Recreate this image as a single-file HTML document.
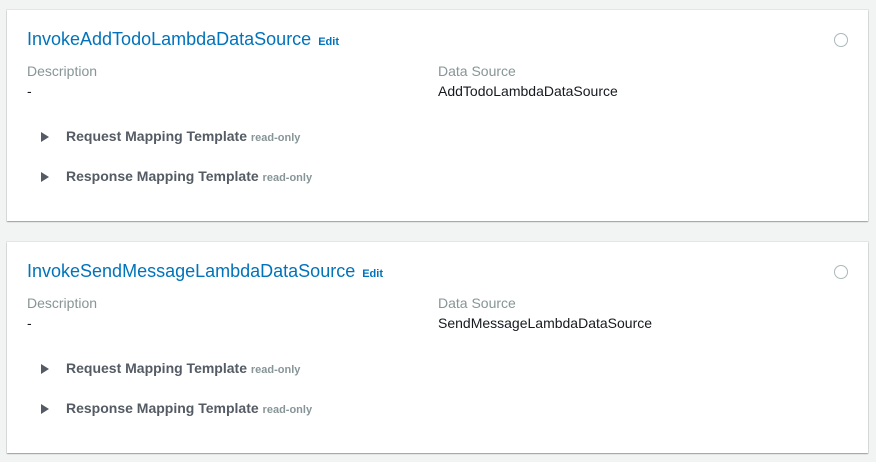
<!DOCTYPE html>
<html><head><style>
body{margin:0;width:876px;height:462px;background:#f2f3f3;font-family:"Liberation Sans",sans-serif;position:relative;overflow:hidden}
.card{position:absolute;left:7px;width:861px;height:211px;background:#fff;box-shadow:0 1px 1px rgba(0,28,36,.35),0 0 0 1px rgba(0,28,36,.06)}
.t{position:absolute;left:20px;top:19px;font-size:18px;color:#0073bb;white-space:nowrap}
.t span{font-size:11px;font-weight:bold;margin-left:2px}
.c{position:absolute;left:827px;top:23px;width:12px;height:12px;border:1px solid #aab7b8;border-radius:50%}
.l{position:absolute;top:53px;font-size:14px;color:#879596}
.v{position:absolute;top:73px;font-size:14px;color:#16191f}
.r{position:absolute;left:34px;font-size:14px;font-weight:bold;color:#545b64;white-space:nowrap}
.r i{display:inline-block;width:0;height:0;border-left:8px solid #545b64;border-top:5px solid transparent;border-bottom:5px solid transparent;margin-right:17px;vertical-align:-1px}
.r span{font-size:11px;color:#879596}
</style></head><body>
<div class="card" style="top:10px">
<div class="t">InvokeAddTodoLambdaDataSource <span>Edit</span></div>
<div class="c"></div>
<div class="l" style="left:20px">Description</div>
<div class="v" style="left:20px">-</div>
<div class="l" style="left:431px">Data Source</div>
<div class="v" style="left:431px">AddTodoLambdaDataSource</div>
<div class="r" style="top:118px"><i></i>Request Mapping Template <span>read-only</span></div>
<div class="r" style="top:158px"><i></i>Response Mapping Template <span>read-only</span></div>
</div>
<div class="card" style="top:242px">
<div class="t">InvokeSendMessageLambdaDataSource <span>Edit</span></div>
<div class="c"></div>
<div class="l" style="left:20px">Description</div>
<div class="v" style="left:20px">-</div>
<div class="l" style="left:431px">Data Source</div>
<div class="v" style="left:431px">SendMessageLambdaDataSource</div>
<div class="r" style="top:118px"><i></i>Request Mapping Template <span>read-only</span></div>
<div class="r" style="top:158px"><i></i>Response Mapping Template <span>read-only</span></div>
</div>
</body></html>
